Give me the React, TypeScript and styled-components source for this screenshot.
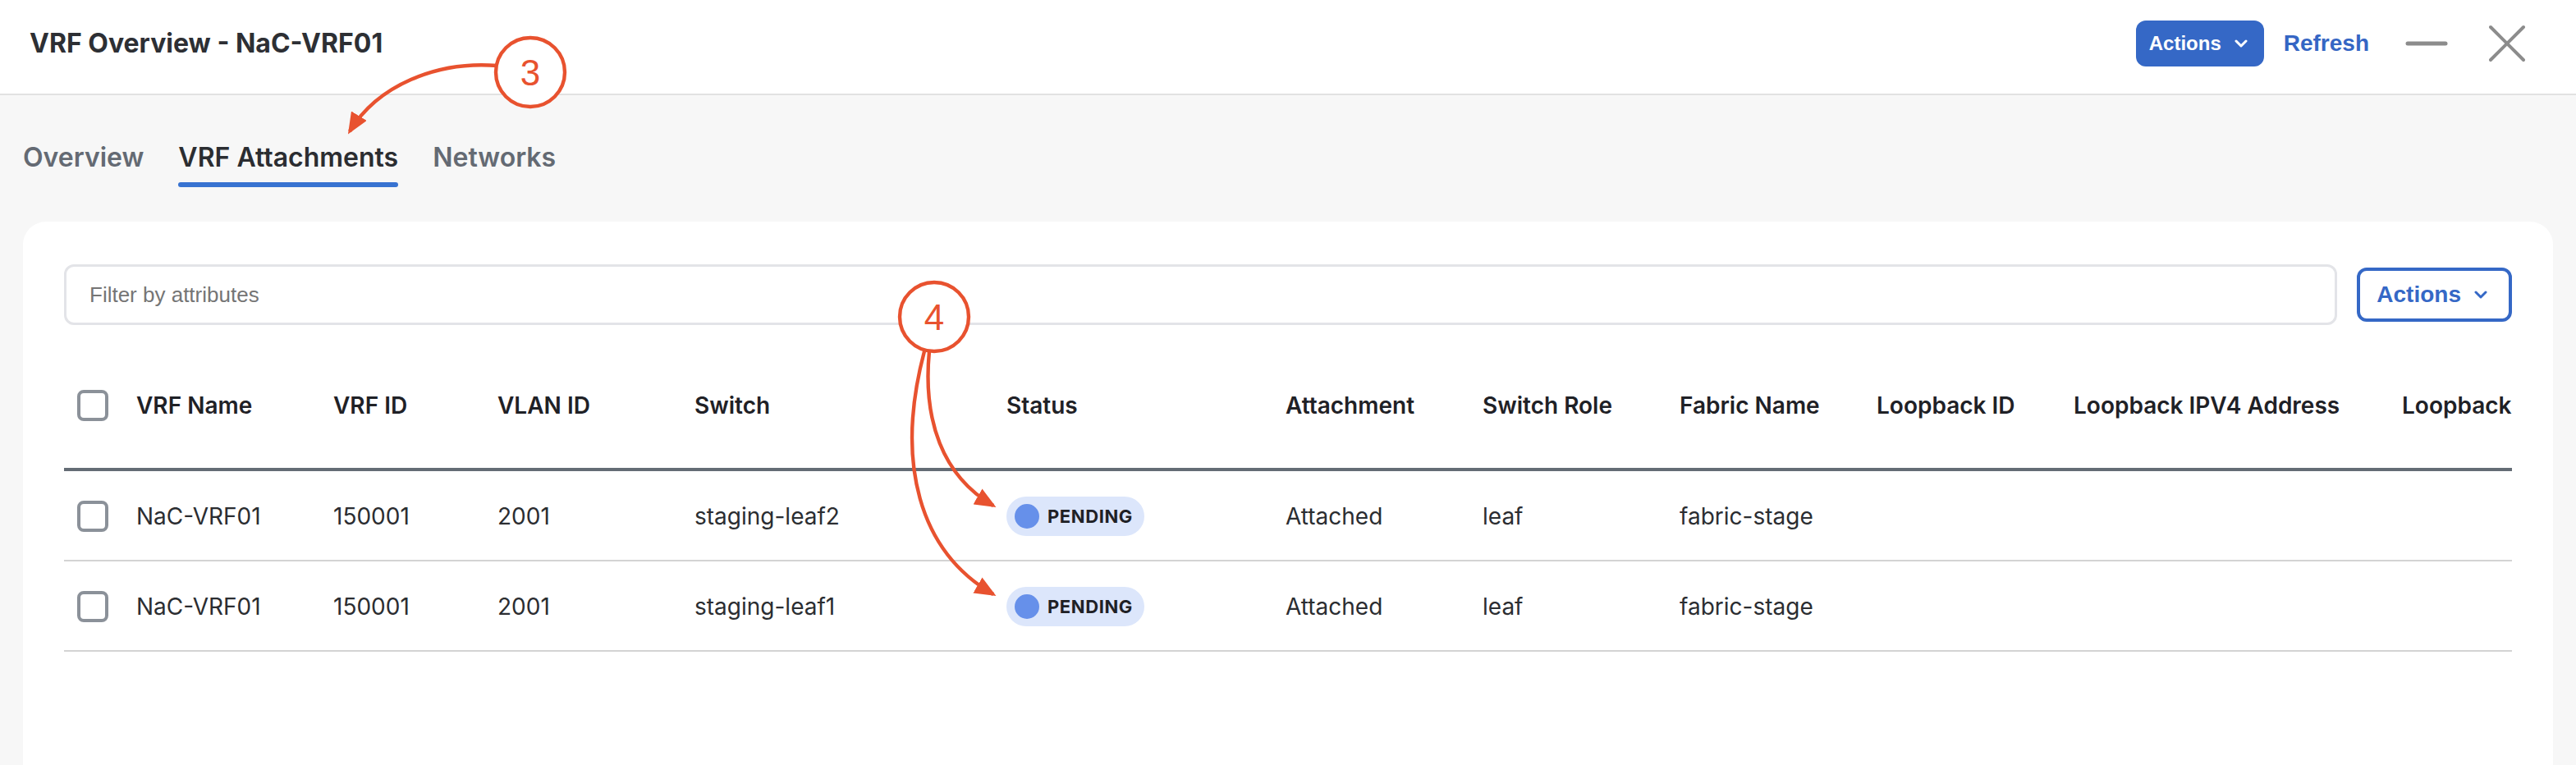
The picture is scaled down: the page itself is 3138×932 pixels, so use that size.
import styled, { createGlobalStyle } from 'styled-components';

const GlobalStyle = createGlobalStyle`
  html, body {
    margin: 0;
    padding: 0;
    background: #f7f7f7;
  }
  * {
    box-sizing: border-box;
  }
`;

const Page = styled.div`
  zoom: 2;
  position: relative;
  width: 1569px;
  height: 466px;
  overflow: hidden;
  background: #f7f7f7;
  font-family: Inter, 'Noto Sans', sans-serif;
  color: #2b2d31;
`;

const TopBar = styled.header`
  height: 58px;
  background: #fff;
  border-bottom: 1px solid #e2e2e2;
  display: flex;
  align-items: center;
  justify-content: space-between;
  padding: 0 31px 4px 18px;
`;

const Title = styled.h1`
  margin: 0;
  font-size: 16px;
  font-weight: 700;
  line-height: 20px;
  color: #2d2f34;
`;

const HeaderActions = styled.div`
  display: flex;
  align-items: center;
`;

const PrimaryButton = styled.button`
  display: inline-flex;
  align-items: center;
  gap: 8px;
  height: 28px;
  padding: 0 10px 0 8px;
  border: none;
  border-radius: 6px;
  background: #3568c6;
  color: #fff;
  font-family: 'Liberation Sans', Arial, sans-serif;
  font-size: 12px;
  font-weight: 700;
`;

const LinkButton = styled.button`
  margin-left: 12px;
  padding: 0;
  border: none;
  background: none;
  color: #3566c4;
  font-family: 'Liberation Sans', Arial, sans-serif;
  font-size: 14px;
  font-weight: 700;
`;

const WindowIcon = styled.svg<{ $gap: number }>`
  display: block;
  margin-left: ${(p) => p.$gap}px;
`;

const Tabs = styled.nav`
  display: flex;
  gap: 21px;
  padding: 28px 0 0 14px;
`;

const Tab = styled.div<{ $active?: boolean }>`
  display: flex;
  flex-direction: column;
  gap: 5px;
  font-size: 16px;
  font-weight: 600;
  line-height: 20px;
  color: ${(p) => (p.$active ? '#2b2d31' : '#646a73')};

  &::after {
    content: '';
    height: 3px;
    border-radius: 2px;
    background: ${(p) => (p.$active ? '#3873d1' : 'transparent')};
  }
`;

const Card = styled.section`
  margin: 21px 14px 0;
  height: 340px;
  padding: 26px 25px 0;
  background: #fff;
  border-radius: 14px 14px 0 0;
`;

const Toolbar = styled.div`
  display: flex;
  align-items: center;
  gap: 12px;
`;

const FilterInput = styled.input`
  flex: 1;
  height: 37px;
  padding: 0 14px;
  border: 1.5px solid #e3e4e8;
  border-radius: 6px;
  font-family: 'Liberation Sans', Arial, sans-serif;
  font-size: 13px;
  color: #333;
  outline: none;

  &::placeholder {
    color: #757575;
  }
`;

const OutlineButton = styled.button`
  display: inline-flex;
  align-items: center;
  gap: 8px;
  height: 33px;
  padding: 0 13px 0 10px;
  border: 2px solid #3568c6;
  border-radius: 6px;
  background: #fff;
  color: #3568c6;
  font-family: 'Liberation Sans', Arial, sans-serif;
  font-size: 14px;
  font-weight: 700;
`;

const Table = styled.div`
  margin-top: 11px;
`;

const columns = '44px 120px 100px 120px 190px 170px 120px 120px 120px 120px 200px 1fr';

const HeadRow = styled.div`
  display: grid;
  grid-template-columns: ${columns};
  align-items: center;
  height: 78px;
  border-bottom: 2px solid #646c75;
`;

const BodyRow = styled.div`
  display: grid;
  grid-template-columns: ${columns};
  align-items: center;
  height: 55px;
  padding-top: 1px;
  border-bottom: 1px solid #d3d3d3;
`;

const Cell = styled.div<{ $head?: boolean }>`
  overflow: hidden;
  white-space: nowrap;
  font-size: 14px;
  line-height: 20px;
  font-weight: ${(p) => (p.$head ? 600 : 400)};
  color: ${(p) => (p.$head ? '#1f2126' : '#2b2d31')};
`;

const Checkbox = styled.span`
  display: block;
  width: 19px;
  height: 19px;
  margin-left: 8px;
  border: 2px solid #8b9199;
  border-radius: 4px;
  background: #fff;
`;

const StatusBadge = styled.span`
  display: inline-flex;
  align-items: center;
  gap: 5px;
  height: 24px;
  padding: 0 7px 0 5px;
  border-radius: 12px;
  background: #dce6fb;
  font-size: 11px;
  font-weight: 700;
  letter-spacing: 0.3px;
  color: #1f2126;
`;

const StatusDot = styled.span`
  width: 15px;
  height: 15px;
  border-radius: 50%;
  background: #6690ea;
`;

const Annotations = styled.svg`
  position: absolute;
  top: 0;
  left: 0;
  pointer-events: none;
`;

const Chevron = ({ color }: { color: string }) => (
  <svg width="8" height="5" viewBox="0 0 8 5">
    <polyline points="1,1 4,4 7,1" fill="none" stroke={color} strokeWidth="1.5" strokeLinecap="round" strokeLinejoin="round" />
  </svg>
);

const headers = [
  'VRF Name',
  'VRF ID',
  'VLAN ID',
  'Switch',
  'Status',
  'Attachment',
  'Switch Role',
  'Fabric Name',
  'Loopback ID',
  'Loopback IPV4 Address',
  'Loopback',
];

const rows = [
  { name: 'NaC-VRF01', id: '150001', vlan: '2001', sw: 'staging-leaf2', attach: 'Attached', role: 'leaf', fabric: 'fabric-stage' },
  { name: 'NaC-VRF01', id: '150001', vlan: '2001', sw: 'staging-leaf1', attach: 'Attached', role: 'leaf', fabric: 'fabric-stage' },
];

const RED = '#e8522f';

export default function App() {
  return (
    <>
      <GlobalStyle />
      <Page>
        <TopBar>
          <Title>VRF Overview - NaC-VRF01</Title>
          <HeaderActions>
            <PrimaryButton>
              Actions
              <Chevron color="#fff" />
            </PrimaryButton>
            <LinkButton>Refresh</LinkButton>
            <WindowIcon $gap={22} width="26" height="4" viewBox="0 0 26 4">
              <line x1="1.5" y1="2" x2="24.5" y2="2" stroke="#8c8c8c" strokeWidth="2.5" strokeLinecap="round" />
            </WindowIcon>
            <WindowIcon $gap={25} width="22" height="23" viewBox="0 0 22 23">
              <line x1="1" y1="1.5" x2="21" y2="21.5" stroke="#8c8c8c" strokeWidth="2" strokeLinecap="round" />
              <line x1="21" y1="1.5" x2="1" y2="21.5" stroke="#8c8c8c" strokeWidth="2" strokeLinecap="round" />
            </WindowIcon>
          </HeaderActions>
        </TopBar>

        <Tabs>
          <Tab>Overview</Tab>
          <Tab $active>VRF Attachments</Tab>
          <Tab>Networks</Tab>
        </Tabs>

        <Card>
          <Toolbar>
            <FilterInput placeholder="Filter by attributes" />
            <OutlineButton>
              Actions
              <Chevron color="#3568c6" />
            </OutlineButton>
          </Toolbar>

          <Table>
            <HeadRow>
              <Cell>
                <Checkbox />
              </Cell>
              {headers.map((h) => (
                <Cell key={h} $head>
                  {h}
                </Cell>
              ))}
            </HeadRow>
            {rows.map((r) => (
              <BodyRow key={r.sw}>
                <Cell>
                  <Checkbox />
                </Cell>
                <Cell>{r.name}</Cell>
                <Cell>{r.id}</Cell>
                <Cell>{r.vlan}</Cell>
                <Cell>{r.sw}</Cell>
                <Cell>
                  <StatusBadge>
                    <StatusDot />
                    PENDING
                  </StatusBadge>
                </Cell>
                <Cell>{r.attach}</Cell>
                <Cell>{r.role}</Cell>
                <Cell>{r.fabric}</Cell>
                <Cell />
                <Cell />
                <Cell />
              </BodyRow>
            ))}
          </Table>
        </Card>

        <Annotations width="1569" height="466" viewBox="0 0 1569 466">
          <defs>
            <marker id="arrowhead" markerWidth="13" markerHeight="11" refX="11" refY="5.5" orient="auto" markerUnits="userSpaceOnUse">
              <path d="M0,0 L13,5.5 L0,11 z" fill={RED} />
            </marker>
          </defs>
          <path d="M303,40 C266,37 230,52 213,80" fill="none" stroke={RED} strokeWidth="2.2" markerEnd="url(#arrowhead)" />
          <path d="M566,214 C562,256 574,290 605,308" fill="none" stroke={RED} strokeWidth="2.2" markerEnd="url(#arrowhead)" />
          <path d="M563,214 C545,282 560,336 605,362" fill="none" stroke={RED} strokeWidth="2.2" markerEnd="url(#arrowhead)" />
          <circle cx="323" cy="44" r="21" fill="#fff" stroke={RED} strokeWidth="2.2" />
          <text x="323" y="52" textAnchor="middle" fontFamily="'Liberation Sans', Arial, sans-serif" fontSize="22" fill={RED}>
            3
          </text>
          <circle cx="569" cy="193" r="21" fill="#fff" stroke={RED} strokeWidth="2.2" />
          <text x="569" y="201" textAnchor="middle" fontFamily="'Liberation Sans', Arial, sans-serif" fontSize="22" fill={RED}>
            4
          </text>
        </Annotations>
      </Page>
    </>
  );
}
